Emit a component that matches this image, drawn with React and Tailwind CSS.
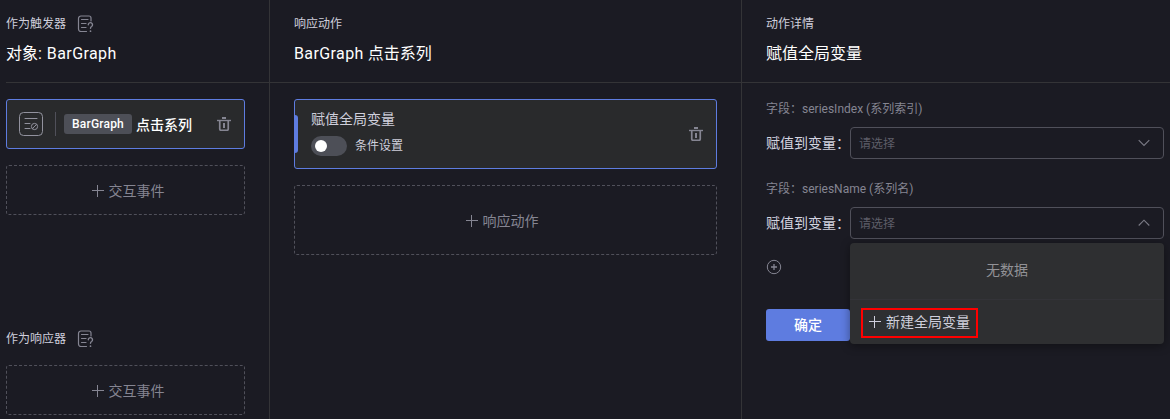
import React from 'react';

function HelpDocIcon() {
  return (
    <svg width="17" height="18" viewBox="0 0 17 18" fill="none" stroke="#858592" strokeWidth="1.200" strokeLinecap="round">
      <path d="M9.500 16.500H4A2.500 2.500 0 0 1 1.500 14V3.500A2.500 2.500 0 0 1 4 1h8a2 2 0 0 1 2 2v3" />
      <path d="M4.500 4.500h6.500M4.500 8.500h4.500M4.500 12.500h4.500" />
      <path d="M11.300 9.800a2.100 2.100 0 1 1 3.300 1.700c-.8.500-1.100.8-1.100 1.800" strokeWidth="1.400" />
      <path d="M13.500 16v.2" strokeWidth="1.700" />
    </svg>
  );
}

function TrashIcon() {
  return (
    <svg width="14" height="14" viewBox="0 0 14 14" fill="none" stroke="#858592">
      <path d="M0 3.500h14" strokeWidth="1.400" />
      <path d="M5 1h4" strokeWidth="2" />
      <path d="M2.750 3.500V12c0 .9.400 1.300 1.200 1.300h6.100c.8 0 1.200-.4 1.200-1.300V3.500" strokeWidth="1.700" />
      <path d="M7 6v5" strokeWidth="2" />
    </svg>
  );
}

function EventIcon() {
  return (
    <svg width="24" height="24" viewBox="0 0 24 24" fill="none" stroke="#92929e">
      <rect x="0.500" y="0.500" width="23" height="23" rx="4" />
      <path d="M6 6.500h12M6 11.500h5M6 16.500h5" strokeLinecap="round" />
      <circle cx="15.500" cy="14.500" r="3.100" />
      <path d="M13.300 16.700l4.400-4.400" />
    </svg>
  );
}

function PlusIcon() {
  return (
    <svg width="12" height="12" viewBox="0 0 12 12" fill="none" stroke="currentColor">
      <path d="M0 5.500h12M5.500 0v12" />
    </svg>
  );
}

function Chevron({ open }) {
  return (
    <svg width="12" height="8" viewBox="0 0 12 8" fill="none" stroke="#7b7b86" strokeWidth="1.100">
      <path d={open ? 'M.7 6.500L6 1.200l5.300 5.300' : 'M.7 1.200L6 6.500l5.300-5.300'} />
    </svg>
  );
}

function Header({ label, title, help, className = '' }) {
  return (
    <div className={`h-[83px] border-b border-[#343437] pt-3.5 ${className}`}>
      <div className="flex h-5 items-center gap-[11px] text-xs text-[#cfcfdc]">
        {label}
        {help && <HelpDocIcon />}
      </div>
      <h2 className="mt-2 text-base leading-6 text-white">{title}</h2>
    </div>
  );
}

function AddBox({ label, className }) {
  return (
    <button
      className={`flex w-full items-center justify-center gap-[5px] rounded-[3px] border border-dashed border-[#50505a] text-sm text-[#858592] ${className}`}
    >
      <PlusIcon />
      {label}
    </button>
  );
}

function VariableField({ field, open, children }) {
  return (
    <div className="h-20">
      <div className="h-5 text-xs leading-5 text-[#858592]">字段：{field}</div>
      <div className="mt-2 flex items-center">
        <span className="w-[84px] shrink-0 text-sm whitespace-nowrap text-[#d4d4e0]">赋值到变量：</span>
        <div className="relative flex h-8 w-[314px] items-center justify-between rounded border border-[#50505a] pr-[13px] pl-2">
          <span className="pt-0.5 text-xs text-[#5e5e68]">请选择</span>
          <Chevron open={open} />
          {children}
        </div>
      </div>
    </div>
  );
}

function VariableMenu() {
  return (
    <div className="absolute top-[35px] -left-px h-[101px] w-[314px] rounded bg-[#2e2f31] shadow-[0_2px_10px_rgba(0,0,0,0.4)]">
      <div className="flex h-[57px] items-center justify-center border-b border-[#333338] pb-[3px] text-sm text-[#929296]">
        无数据
      </div>
      <div className="pt-2 pl-[11px]">
        <button className="flex h-[30px] w-[117px] items-center gap-[5px] border-2 border-[#ff0000] pb-0.5 pl-1.5 text-sm whitespace-nowrap text-[#cfcfdc]">
          <PlusIcon />
          新建全局变量
        </button>
      </div>
    </div>
  );
}

export default function App() {
  return (
    <div className="flex h-[419px] w-[1170px] overflow-hidden bg-[#1b1b23] font-['Roboto','Noto_Sans_CJK_SC',sans-serif]">
      {/* Triggers */}
      <section className="w-[270px] shrink-0 border-r border-[#343437] pl-1.5">
        <Header
          label="作为触发器"
          title={<>对象: <span className="ml-px tracking-[0.4px]">BarGraph</span></>}
          help
        />
        <div className="mt-4 w-[239px]">
          <div className="flex h-[50px] items-center rounded-[3px] border border-[#5e7ce0] bg-[#292a2c] pr-[13px] pl-3">
            <EventIcon />
            <span className="ml-3 h-6 w-px bg-[#50505a]" />
            <span className="ml-2 flex h-5 w-[68px] items-center justify-center rounded-[3px] bg-[#4d4f57] text-xs font-medium tracking-[0.2px] text-white">
              BarGraph
            </span>
            <span className="ml-1 pt-0.5 text-sm font-medium text-white">点击系列</span>
            <span className="ml-auto">
              <TrashIcon />
            </span>
          </div>
          <AddBox label="交互事件" className="mt-4 h-[50px] pt-0.5 pl-[5px]" />
          <div className="mt-[114px] flex h-5 items-center gap-[11px] text-xs text-[#cfcfdc]">
            作为响应器
            <HelpDocIcon />
          </div>
          <AddBox label="交互事件" className="mt-4 h-[50px] pt-0.5 pl-[5px]" />
        </div>
      </section>

      {/* Actions */}
      <section className="w-[472px] shrink-0 border-r border-[#343437]">
        <Header
          label="响应动作"
          title={<><span className="tracking-[0.4px]">BarGraph</span> 点击系列</>}
          className="pl-6"
        />
        <div className="mt-4 mr-6 ml-6">
          <div className="relative flex h-[70px] items-center justify-between rounded-[3px] border border-[#5e7ce0] bg-[#292a2c] pr-[13px] pl-4">
            <span className="absolute top-[15px] left-0 h-[38px] w-[3px] rounded-r-[3px] bg-[#5e7ce0]" />
            <div className="pb-[3px]">
              <div className="text-sm leading-5 text-[#cfcfdc]">赋值全局变量</div>
              <div className="mt-[7px] flex items-center gap-2">
                <span className="flex h-5 w-9 items-center rounded-full bg-[#4d4f57] pl-1">
                  <span className="size-3 rounded-full bg-white" />
                </span>
                <span className="text-xs text-[#cfcfdc]">条件设置</span>
              </div>
            </div>
            <TrashIcon />
          </div>
          <AddBox label="响应动作" className="mt-4 h-[70px] pt-0.5 pr-[7px]" />
        </div>
      </section>

      {/* Action detail */}
      <section className="grow">
        <Header label="动作详情" title="赋值全局变量" className="pl-6" />
        <div className="mt-4 pl-6">
          <VariableField field="seriesIndex (系列索引)" />
          <VariableField field="seriesName (系列名)" open>
            <VariableMenu />
          </VariableField>
          <svg width="16" height="16" viewBox="0 0 16 16" fill="none" stroke="#858592" className="block">
            <circle cx="8" cy="8" r="6.700" />
            <path d="M5 8h6M8 5v6" strokeWidth="1.300" />
          </svg>
          <button className="mt-[34px] block h-8 w-[84px] rounded-[3px] bg-[#5e7ce0] text-sm font-medium text-white">确定</button>
        </div>
      </section>
    </div>
  );
}
